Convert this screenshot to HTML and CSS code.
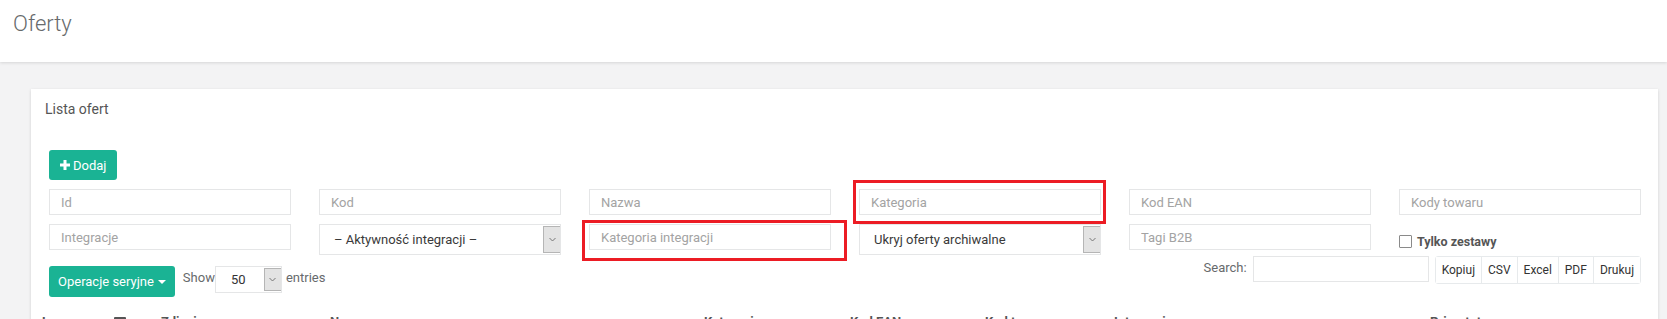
FILE: index.html
```html
<!DOCTYPE html>
<html lang="pl">

<head>
    <meta charset="UTF-8">
    <meta name="viewport" content="width=device-width, initial-scale=1.0">
    <title>Oferty</title>
    <link rel="stylesheet" href="styles.css">
</head>

<body>

    <div class="topbar">
        <h2>Oferty</h2>
    </div>

    <div class="content">
        <div class="card">
            <div class="card-title">Lista ofert</div>

            <div class="card-body">
                <button type="button" class="btn btn-add">
                    <svg width="10" height="10" viewBox="0 0 10 10"><path d="M5 0v10M0 5h10" stroke="#fff" stroke-width="3"/></svg>
                    Dodaj
                </button>

                <div class="filters">
                    <input type="text" placeholder="Id">
                    <input type="text" placeholder="Kod">
                    <input type="text" placeholder="Nazwa">
                    <input type="text" placeholder="Kategoria">
                    <input type="text" placeholder="Kod EAN">
                    <input type="text" placeholder="Kody towaru">

                    <input type="text" placeholder="Integracje">
                    <div class="select">
                        <span>– Aktywność integracji –</span>
                        <span class="arrow"><svg width="7" height="5" viewBox="0 0 7 5"><path d="M0.5 1l3 3 3-3" fill="none" stroke="#777"/></svg></span>
                    </div>
                    <input type="text" placeholder="Kategoria integracji">
                    <div class="select">
                        <span>Ukryj oferty archiwalne</span>
                        <span class="arrow"><svg width="7" height="5" viewBox="0 0 7 5"><path d="M0.5 1l3 3 3-3" fill="none" stroke="#777"/></svg></span>
                    </div>
                    <input type="text" placeholder="Tagi B2B">
                    <label class="check"><span class="box"></span>Tylko zestawy</label>

                    <div class="mark mark-kat"></div>
                    <div class="mark mark-int"></div>
                </div>

                <div class="toolbar">
                    <div class="left-tools">
                        <button type="button" class="btn btn-ops">Operacje seryjne <span class="caret"></span></button>
                        <span class="label">Show</span>
                        <div class="select select-small">
                            <span>50</span>
                            <span class="arrow"><svg width="7" height="5" viewBox="0 0 7 5"><path d="M0.5 1l3 3 3-3" fill="none" stroke="#777"/></svg></span>
                        </div>
                        <span class="label">entries</span>
                    </div>
                    <div class="right-tools">
                        <span class="label">Search:</span>
                        <input type="text" class="search">
                        <div class="btn-group">
                            <button type="button">Kopiuj</button>
                            <button type="button">CSV</button>
                            <button type="button">Excel</button>
                            <button type="button">PDF</button>
                            <button type="button">Drukuj</button>
                        </div>
                    </div>
                </div>

                <table class="offers">
                    <thead>
                        <tr>
                            <th class="c1">Lp</th>
                            <th class="c2"><span class="box"></span></th>
                            <th class="c3">Zdjęcie</th>
                            <th class="c4">Nazwa</th>
                            <th class="c5">Kategoria</th>
                            <th class="c6">Kod EAN</th>
                            <th class="c7">Kod towaru</th>
                            <th class="c8">Integracje</th>
                            <th>Priorytet</th>
                        </tr>
                    </thead>
                </table>
            </div>
        </div>
    </div>

</body>

</html>
```

FILE: styles.css
```css
body {
    margin: 0;
    background: #f3f3f4;
    font-family: Roboto, "Open Sans", sans-serif;
    font-size: 13px;
    color: #676a6c;
    overflow: hidden;
}

.topbar {
    height: 62px;
    background: #fff;
    padding-left: 13px;
    box-sizing: border-box;
    box-shadow: 0 1px 3px rgba(0, 0, 0, 0.12);
}

.topbar h2 {
    margin: 0;
    padding-top: 11px;
    font-size: 22px;
    font-weight: 300;
    color: #676a6c;
}

.content {
    padding: 27px 9px 0 31px;
}

.card {
    background: #fff;
    box-shadow: 0 1px 3px rgba(0, 0, 0, 0.14);
}

.card-title {
    padding: 12px 14px 0;
    font-size: 14px;
    color: #555;
}

.card-body {
    padding: 33px 17px 0 18px;
}

.btn {
    border: none;
    border-radius: 3px;
    background: #1ab394;
    color: #fff;
    font-family: inherit;
    font-size: 13px;
    cursor: pointer;
}

.btn-add {
    display: flex;
    align-items: center;
    gap: 3px;
    height: 30px;
    padding: 0 11px;
}

/* filtry */
.filters {
    position: relative;
    display: grid;
    grid-template-columns: repeat(6, 242px);
    column-gap: 28px;
    row-gap: 9px;
    align-items: start;
    margin-top: 9px;
}

input {
    height: 26px;
    box-sizing: border-box;
    border: 1px solid #e5e6e7;
    padding: 0 11px;
    font-family: inherit;
    font-size: 13px;
    color: #333;
    outline: none;
}

input::placeholder {
    color: #a3a3a3;
}

.select {
    display: flex;
    align-items: center;
    justify-content: space-between;
    height: 31px;
    box-sizing: border-box;
    border: 1px solid #e5e6e7;
    padding-left: 14px;
    color: #3a3a3a;
    font-size: 13px;
}

.select .arrow {
    display: flex;
    align-items: center;
    justify-content: center;
    align-self: stretch;
    width: 16px;
    margin: 1px 0;
    background: #e3e3e3;
    border: 1px solid #b5b5b5;
    border-right: none;
}

.check {
    display: flex;
    align-items: center;
    gap: 5px;
    height: 31px;
    padding-top: 3px;
    box-sizing: border-box;
    font-weight: bold;
    font-size: 12.5px;
    color: #555;
}

.box {
    display: inline-block;
    width: 12px;
    height: 12px;
    border: 1px solid #8a8a8a;
    border-radius: 1px;
    box-sizing: border-box;
}

.check .box {
    width: 13px;
    height: 13px;
    border-width: 1.5px;
}

/* zaznaczenia */
.mark {
    position: absolute;
    border: 3px solid #ec1c24;
    box-sizing: border-box;
}

.mark-kat {
    left: 804px;
    top: -9px;
    width: 253px;
    height: 44px;
}

.mark-int {
    left: 533px;
    top: 31px;
    width: 265px;
    height: 41px;
}

/* pasek narzedzi */
.toolbar {
    display: flex;
    justify-content: space-between;
    align-items: flex-start;
    margin-top: 1px;
}

.left-tools {
    display: flex;
    align-items: flex-start;
    margin-top: 10px;
}

.btn-ops {
    height: 31px;
    padding: 0 9px;
    display: flex;
    align-items: center;
    gap: 4px;
}

.caret {
    width: 0;
    height: 0;
    border-left: 4px solid transparent;
    border-right: 4px solid transparent;
    border-top: 4px solid #fff;
}

.label {
    line-height: 24px;
}

.left-tools .label {
    margin-left: 8px;
}

.select-small {
    width: 67px;
    height: 27px;
    padding-left: 15px;
    font-size: 13px;
    color: #333;
}

.left-tools .label + .select-small + .label {
    margin-left: 4px;
}

.right-tools {
    display: flex;
    align-items: flex-start;
}

.search {
    width: 176px;
    margin-left: 6px;
}

.btn-group {
    display: flex;
    margin-left: 6px;
    border: 1px solid #e7eaec;
    border-radius: 3px;
}

.btn-group button {
    height: 26px;
    padding: 0 6px;
    background: #fff;
    border: none;
    border-left: 1px solid #e7eaec;
    font-family: inherit;
    font-size: 12px;
    color: #333;
}

.btn-group button:first-child {
    border-left: none;
}

/* tabela */
.offers {
    margin-left: -15px;
    margin-top: 9px;
    border-collapse: collapse;
    table-layout: fixed;
    width: calc(100% + 15px);
}

.offers th {
    padding: 8px;
    text-align: left;
    font-weight: bold;
    color: #555;
    white-space: nowrap;
}

.offers .box {
    border-color: #555;
    border-width: 2px;
    vertical-align: middle;
}

.c1 { width: 56px; }
.c2 { width: 31px; }
.c3 { width: 153px; }
.c4 { width: 358px; }
.c5 { width: 130px; }
.c6 { width: 119px; }
.c7 { width: 113px; }
.c8 { width: 300px; }
```
